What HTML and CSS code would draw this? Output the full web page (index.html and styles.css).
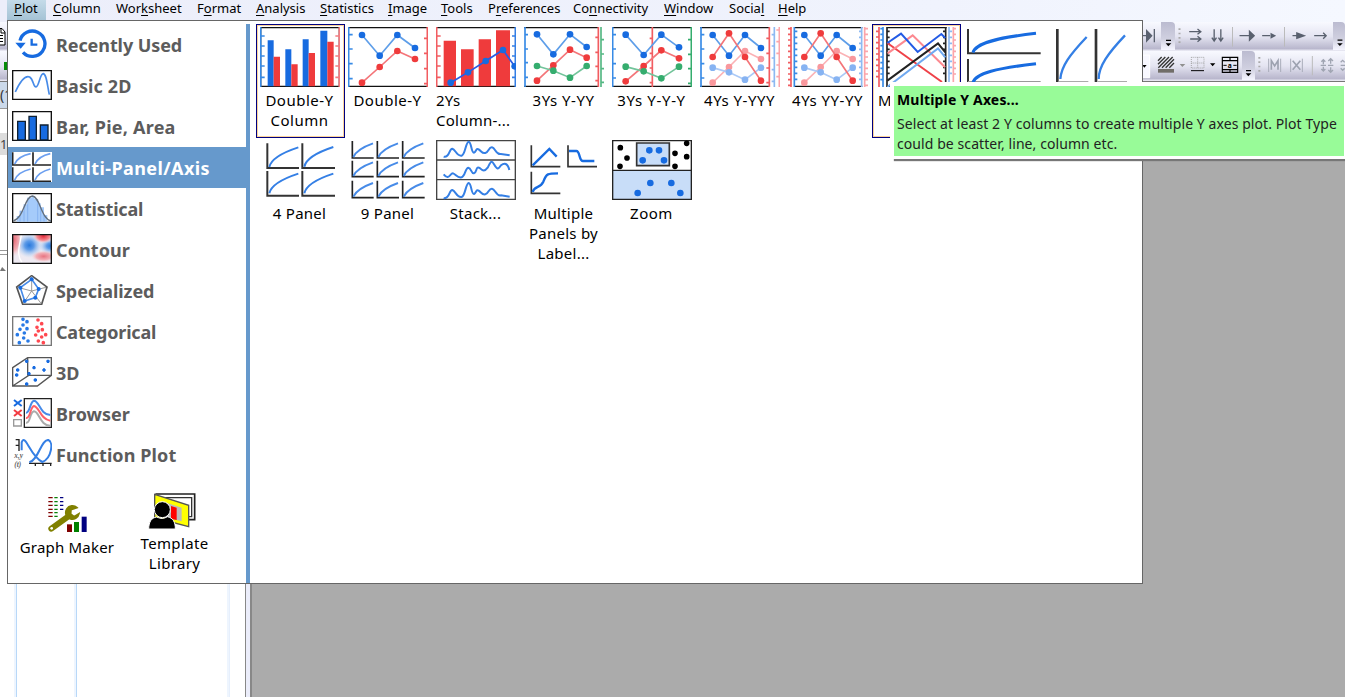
FILE: index.html
```html
<!DOCTYPE html>
<html lang="en">
<head>
<meta charset="utf-8">
<title>Plot menu</title>
<link rel="stylesheet" href="styles.css">
</head>
<body>
<div class="app">
  <nav class="menubar">
    <span class="menu open"><u>P</u>lot</span>
    <span class="menu w-column"><u>C</u>olumn</span>
    <span class="menu w-worksheet">Wor<u>k</u>sheet</span>
    <span class="menu w-format">F<u>o</u>rmat</span>
    <span class="menu w-analysis"><u>A</u>nalysis</span>
    <span class="menu w-statistics"><u>S</u>tatistics</span>
    <span class="menu w-image"><u>I</u>mage</span>
    <span class="menu w-tools"><u>T</u>ools</span>
    <span class="menu w-preferences">P<u>r</u>eferences</span>
    <span class="menu w-connectivity">Co<u>n</u>nectivity</span>
    <span class="menu w-window"><u>W</u>indow</span>
    <span class="menu w-social">Socia<u>l</u></span>
    <span class="menu w-help"><u>H</u>elp</span>
  </nav>
  <div class="toolbar row1">
    <svg class="doc" viewBox="0 0 6 18" width="6" height="18"><path d="M0 .5H2L5 4V17H0" fill="#fff" stroke="#000"/><path d="M1 1V5H5M0 7.5H3M0 10.5H3M0 13.5H3" stroke="#000" fill="none"/></svg>
    <div class="tools">
      <svg viewBox="24 21 54 84" width="18" height="28"><path d="M24 62H36M35 47V78L50 62ZM58 42V82" stroke="#5b6270" stroke-width="4" fill="#5b6270"/></svg>
      <svg class="handle" viewBox="78 21 42 84" width="14" height="28"><path d="M93 76H108" stroke="#000" stroke-width="4"/><path d="M92 85H109L100 94Z"/></svg>
      <svg viewBox="120 21 473 84" width="158" height="28">
        <path d="M133 40V84" stroke="#aaa" stroke-width="6" stroke-dasharray="5 8"/>
        <g stroke="#59606e" stroke-width="4" fill="none"><path d="M162 50H195M187 42L197 50L187 58M165 72H195M187 64L197 72L187 80M237 43V77M230 68L237 78L244 68M257 43V77M250 68L257 78L264 68"/><path d="M313 62H343M381 62H405M472 62H495M537 62H570M564 53L573 62L564 71"/></g>
        <path d="M341 44V80L360 62ZM406 53V71L423 62ZM483 51L513 62L483 73Z" fill="#59606e"/>
        <path d="M292 36V95M448 36V95" stroke="#bbb" stroke-width="3"/>
      </svg>
      <svg class="handle" viewBox="593 21 37 84" width="12" height="28"><path d="M607 76H622" stroke="#000" stroke-width="4"/><path d="M606 85H623L614 94Z"/></svg>
    </div>
  </div>
  <div class="toolbar row2">
    <i class="green-dot"></i>
    <div class="tools">
      <svg viewBox="24 108 297 87" width="99" height="29">
        <path d="M24 120H44V188H24" fill="#f8f8ff" stroke="#fff" stroke-width="3"/><path d="M22 150H35L28 158ZM225 145H241L233 154Z"/>
        <path d="M69 137L80 126M69 148L91 126M70 158L102 126M81 158L113 126M92 158L117 133M103 158L117 144" stroke="#333" stroke-width="4"/><path d="M69 162H117V173H69Z" fill="#706d68"/>
        <path d="M134 147H151L142 156Z" fill="#909090"/>
        <path d="M169 127H207V159H169ZM169 144H207M188 127V159" fill="none" stroke="#999" stroke-width="2.5" stroke-dasharray="3 3"/><path d="M168 167H207" stroke="#000" stroke-width="3"/>
        <path d="M262 127H308V172H262ZM262 137H308M262 164H308M285 127V137M285 164V172" fill="none" stroke="#000" stroke-width="3.5"/><path d="M265 151H275M295 151H305" stroke="#000" stroke-width="3"/><text x="278" y="158" font-size="20" font-weight="bold">a</text>
      </svg>
      <svg class="handle" viewBox="321 108 39 87" width="13" height="29"><path d="M333 167H348" stroke="#000" stroke-width="4"/><path d="M332 175H349L340 184Z"/></svg>
      <svg viewBox="360 108 270 87" width="90" height="29">
        <path d="M373 126V171" stroke="#aaa" stroke-width="6" stroke-dasharray="5 8"/>
        <path d="M401 131V171M437 131V171M467 131V171M502 131V171" stroke="#a9adba" stroke-width="3"/>
        <path d="M409 164V137L419 153L429 137V164M473 137L496 164M496 137L473 164" stroke="#9da2b0" stroke-width="5" fill="none"/>
        <path d="M532 123V181" stroke="#bbb" stroke-width="3"/>
        <path d="M565 135V148M565 155V168M587 131V146M587 157V172M557 151H573M579 151H595M559 140L565 134L571 140M559 162L565 168L571 162M580 138L587 131L594 138M580 165L587 172L594 165M617 142L623 136L629 142M617 160L623 166L629 160M617 151H630" stroke="#a0a5b2" stroke-width="4" fill="none"/>
      </svg>
    </div>
  </div>
  <main class="workspace">
    <section class="sheet">
      <div class="cellref">(1</div>
      <div class="rowno">1</div>
      <div class="splitter"></div>
      <i class="up"></i>
      <div class="grid"><i class="c1"></i><i class="c2"></i><i class="c3"></i></div>
    </section>
    <div class="frame"></div>
  </main>

  <div class="popup">
    <aside class="side">
      <ul class="cats">
        <li><svg viewBox="36 87 120 90" width="40" height="30"><path d="M60 122A38 38 0 1 1 69 157" fill="none" stroke="#176be0" stroke-width="10"/><path d="M46 128H77L62 146Z" fill="#176be0"/><path d="M95 116V134H112" fill="none" stroke="#176be0" stroke-width="7"/></svg><b class="l1">Recently Used</b></li>
        <li><svg viewBox="36 210 120 90" width="40" height="30"><path d="M38 212H154V298H38Z" fill="#fff" stroke="#111" stroke-width="4"/><path d="M46 276C60 245 75 225 89 231C101 238 99 261 108 261C117 260 120 220 130 221C140 223 142 257 148 284" fill="none" stroke="#478be8" stroke-width="5"/></svg><b class="l2">Basic 2D</b></li>
        <li><svg viewBox="36 333 120 90" width="40" height="30"><path d="M38 335H154V421H38Z" fill="#fff" stroke="#111" stroke-width="4"/><path d="M53 364H76V420H53ZM87 349H109V420H87ZM121 375H144V420H121Z" fill="#176be0" stroke="#102030" stroke-width="4"/></svg><b class="l3">Bar, Pie, Area</b></li>
        <li class="active"><svg viewBox="36 456 120 90" width="40" height="30"><path d="M36 456H156V546H36Z" fill="#fff"/><path d="M38 457V495H92M99 457V495H153M38 502V544H92M99 502V544H153" fill="none" stroke="#222" stroke-width="5"/><path d="M44 492Q54 469 92 461M105 492Q115 469 151 461M44 540Q54 516 92 507M105 540Q115 516 151 507" fill="none" stroke="#6b9ff0" stroke-width="5"/></svg><b class="l4">Multi-Panel/Axis</b></li>
        <li><svg viewBox="36 24 120 90" width="40" height="30"><path d="M38 26H154V112H38Z" fill="#fff" stroke="#111" stroke-width="4"/><path d="M50 110V93H60V77H72V58H83V38H95V32H103V42H113V55H122V67H132V90H142V110Z" fill="#a5cbfa"/><path d="M60 77V110M72 58V110M83 38V110M113 42V110M122 67V110M132 90V110" stroke="#78a8ec" stroke-width="2"/><path d="M40 108C72 98 74 34 97 33C120 34 122 99 153 108" fill="none" stroke="#626e7c" stroke-width="4"/></svg><b class="l5">Statistical</b></li>
        <li><svg viewBox="36 147 120 90" width="40" height="30"><defs><radialGradient id="blue"><stop offset="0" stop-color="#2879dc"/><stop offset=".35" stop-color="#5d9be8"/><stop offset="1" stop-color="#b8d8f8" stop-opacity="0"/></radialGradient><radialGradient id="red"><stop offset="0" stop-color="#e32737"/><stop offset=".6" stop-color="#f58b91"/><stop offset="1" stop-color="#fbd4d5" stop-opacity="0"/></radialGradient></defs><path d="M38 149H154V235H38Z" fill="#eeeaf2"/><ellipse cx="88" cy="181" rx="40" ry="38" fill="url(#blue)"/><ellipse cx="153" cy="183" rx="38" ry="26" fill="url(#blue)"/><ellipse cx="130" cy="153" rx="32" ry="22" fill="url(#red)"/><ellipse cx="42" cy="164" rx="24" ry="52" fill="url(#red)" opacity=".65"/><ellipse cx="131" cy="214" rx="38" ry="18" fill="url(#red)" opacity=".6"/><path d="M64 149C62 172 46 208 66 232" stroke="#fff" stroke-width="4" fill="none"/><path d="M38 149H154V235H38Z" fill="none" stroke="#111" stroke-width="4"/></svg><b class="l6">Contour</b></li>
        <li><svg viewBox="36 270 120 90" width="40" height="30"><path d="M95 272L141 306L125 358H68L50 306Z" fill="none" stroke="#555" stroke-width="5"/><path d="M95 318V273M95 318L138 307M95 318L123 355M95 318L70 355M95 318L53 307" stroke="#999" stroke-width="3"/><path d="M95 283L116 312L106 338L74 348L61 308Z" fill="none" stroke="#478be8" stroke-width="5"/><g fill="#176be0"><circle cx="95" cy="283" r="6"/><circle cx="116" cy="312" r="6"/><circle cx="106" cy="338" r="6"/><circle cx="74" cy="348" r="6"/><circle cx="61" cy="308" r="6"/></g></svg><b class="l7">Specialized</b></li>
        <li><svg viewBox="36 393 120 90" width="40" height="30"><path d="M38 395H154V481H38Z" fill="#fff" stroke="#777" stroke-width="4"/><path d="M69 403h0M81 410h0M69 420h0M60 433h0M81 431h0M73 444h0M52 449h0M71 459h0M84 468h0M58 473h0" stroke="#2879e5" stroke-width="11" stroke-linecap="round"/><path d="M114 405h0M125 416h0M111 427h0M127 434h0M115 438h0M107 450h0M137 449h0M125 456h0M115 468h0M130 473h0" stroke="#ff4850" stroke-width="11" stroke-linecap="round"/></svg><b class="l8">Categorical</b></li>
        <li><svg viewBox="36 51 120 90" width="40" height="30"><path d="M38 83L83 53H154V106L112 138H38ZM38 138L86 106H154M83 53V106" fill="none" stroke="#555" stroke-width="4"/><path d="M75 64h10m-5-5v10M139 64h10m-5-5v10M97 83h10m-5-5v10M48 90h10m-5-5v10M127 90h10m-5-5v10M45 105h10m-5-5v10M82 101h10m-5-5v10M101 120h10m-5-5v10M75 132h10m-5-5v10" stroke="#176be0" stroke-width="6"/></svg><b class="l9">3D</b></li>
        <li><svg viewBox="36 174 120 90" width="40" height="30"><path d="M42 180L65 198M65 180L42 198" stroke="#176be0" stroke-width="6"/><path d="M42 210L65 228M65 210L42 228" stroke="#f23b42" stroke-width="6"/><path d="M41 239H64V258H41Z" fill="#fff" stroke="#999" stroke-width="4"/><path d="M73 176H154V262H73Z" fill="#fff" stroke="#222" stroke-width="4"/><g fill="none" stroke-width="6"><path d="M78 248C92 251 88 217 102 214C118 215 121 258 151 257" stroke="#aaa"/><path d="M78 234C92 237 90 200 102 198C118 200 121 239 151 242" stroke="#ff6068"/><path d="M78 218C90 220 90 183 102 182C118 182 120 224 151 225" stroke="#478be8"/></g></svg><b class="l10">Browser</b></li>
        <li><svg viewBox="36 297 120 90" width="40" height="30"><path d="M47 299H57V333M47 316H57M87 370H155M106 370V378M129 370V378M152 370V378" fill="none" stroke="#222" stroke-width="4"/><path d="M65 331V307C76 278 90 349 127 366C155 355 161 306 145 300C123 298 116 360 88 367" fill="none" stroke="#347fe5" stroke-width="6"/><text class="formula" x="43" y="353">x,y</text><text class="formula" x="43" y="380">(t)</text></svg><b class="l11">Function Plot</b></li>
      </ul>
      <div class="actions">
        <div class="maker"><svg viewBox="141 45 123 114" width="41" height="38"><path d="M145 53H158M145 65H158M145 76H158M145 88H158M145 98H158M145 109H158" stroke="#800000" stroke-width="4"/><path d="M163 53H173M163 65H173M163 76H173M163 88H173M163 98H173M163 109H173" stroke="#088008" stroke-width="4"/><path d="M180 53H190M180 65H190M180 76H190M180 88H190" stroke="#000080" stroke-width="4"/><path d="M154 146L204 110" stroke="#808000" stroke-width="18" stroke-linecap="round"/><path d="M231 83A20 20 0 1 0 237 101L222 110L212 102L213 89Z" fill="#808000" stroke="#808000" stroke-width="5"/><circle cx="155" cy="145" r="4" fill="#fff"/><path d="M201 133H216V156H201Z" fill="#800000"/><path d="M222 126H237V156H222Z" fill="#008000"/><path d="M245 110H260V156H245Z" fill="#000080"/></svg><span>Graph Maker</span></div>
        <div class="template"><svg viewBox="444 36 144 114" width="48" height="38"><path d="M466 42H584V119H557" fill="#fff" stroke="#222" stroke-width="5"/><path d="M480 53H575V110H565" fill="#fff" stroke="#333" stroke-width="4"/><path d="M464 43L566 76V140L464 113Z" fill="#ff0" stroke="#555" stroke-width="4"/><path d="M490 65L545 83V124L490 112Z" fill="#bbb"/><path d="M513 78L530 83V120L513 116Z" fill="#f00"/><path d="M446 147C447 124 454 114 470 111C484 117 490 117 502 110C519 114 526 125 526 147Z" stroke="#fff" stroke-width="3"/><circle cx="487" cy="89" r="24" stroke="#fff" stroke-width="3"/></svg><span>Template<br>Library</span></div>
      </div>
    </aside>
    <section class="gallery">
      <div class="tile picked wide"><svg viewBox="30 27 240 180"><path d="M32 29H268V205H32Z" fill="#fff" stroke="#111" stroke-width="4"/><path d="M53 67H71V205H53ZM106 94H124V205H106ZM158 64H176V205H158ZM211 38H232V205H211Z" fill="#176be0"/><path d="M71 116H90V205H71ZM124 139H143V205H124ZM176 105H195V205H176ZM232 71H251V205H232Z" fill="#ef3b3c"/><path d="M32 27V207M32 54H44M32 84H44M32 114H44M32 144H44M32 178H44" stroke="#388be6" stroke-width="5"/><path d="M268 27V207M256 54H268M256 84H268M256 114H268M256 144H268M256 178H268" stroke="#f57c81" stroke-width="5"/></svg><span>Double-Y<br>Column</span></div>
      <div class="tile wide"><svg viewBox="294 27 240 180"><path d="M294 29H534M294 205H534" stroke="#111" stroke-width="4"/><path d="M296 27V207M296 50H308M296 93H308M296 137H308M296 182H308" stroke="#388be6" stroke-width="5"/><path d="M532 27V207M522 61H534M522 106H534M522 152H534M522 197H534" stroke="#f25d61" stroke-width="5"/><path class="line blue" d="M336 51L389 113L442 51L495 90"/><path class="line red" d="M336 194L389 147L442 99L495 123"/></svg><span>Double-Y</span></div>
      <div class="tile left"><svg viewBox="18 27 240 180"><path d="M18 29H258M18 205H258" stroke="#111" stroke-width="4"/><path d="M41 68H78V205H41ZM93 94H131V205H93ZM146 64H183V205H146ZM198 37H240V205H198Z" fill="#ef3b3c"/><path d="M20 27V207M20 54H32M20 84H32M20 114H32M20 144H32M20 178H32" stroke="#f25d61" stroke-width="5"/><path d="M256 27V207M246 54H258M246 84H258M246 114H258M246 178H258" stroke="#347fe5" stroke-width="5"/><path class="line deep" d="M62 194L114 163L167 129L219 96L254 145"/></svg><span>2Ys<br>Column-...</span></div>
      <div class="tile wide"><svg viewBox="282 27 240 180"><path d="M282 29H507M282 205H507" stroke="#111" stroke-width="4"/><path d="M285 27V207M285 50H294M285 93H294M285 134H294M285 178H294" stroke="#388be6" stroke-width="5"/><path d="M505 27V207M496 58H507M496 103H507M496 145H507M496 188H507" stroke="#f25d61" stroke-width="5"/><path d="M513 27V207M513 65H522M513 108H522M513 152H522M513 193H522" stroke="#55b884" stroke-width="5"/><path class="line blue" d="M321 49L370 109L420 49L470 87"/><path class="line red" d="M321 188L370 142L420 95L470 119"/><path class="line green" d="M321 144L370 158L420 179L470 144"/></svg><span>3Ys Y-YY</span></div>
      <div class="tile wider"><svg viewBox="21 27 240 180"><path d="M21 29H261M21 205H261" stroke="#111" stroke-width="4"/><path d="M23 27V207M23 50H33M23 93H33M23 137H33M23 180H33" stroke="#388be6" stroke-width="5"/><path d="M142 27V207M134 61H142M134 106H142M134 150H142M134 194H142" stroke="#f25d61" stroke-width="5"/><path d="M259 27V207M249 65H259M249 109H259M249 152H259M249 196H259" stroke="#35ad6e" stroke-width="5"/><path class="line blue" d="M62 50L116 111L169 50L222 88"/><path class="line red" d="M62 190L116 144L169 97L222 121"/><path class="line green" d="M62 146L116 160L169 181L222 146"/></svg><span>3Ys Y-Y-Y</span></div>
      <div class="tile wide"><svg viewBox="285 27 240 180"><path d="M285 29H495M285 205H495" stroke="#111" stroke-width="4"/><path d="M288 27V207M288 50H298M288 93H298M288 137H298M288 180H298" stroke="#388be6" stroke-width="5"/><path d="M493 27V207M484 61H493M484 106H493M484 150H493M484 194H493" stroke="#f25d61" stroke-width="5"/><path d="M508 27V207M500 50H508M500 84H508M500 120H508M500 155H508M500 190H508" stroke="#8db9f2" stroke-width="5"/><path d="M523 27V207M514 36H523M514 71H523M514 106H523M514 141H523M514 176H523" stroke="#fca5aa" stroke-width="5"/><path class="line pink" d="M323 194L372 147L420 99L468 123"/><path class="line pale" d="M323 149L372 163L420 185L468 149"/><path class="line blue" d="M323 51L372 113L420 51L468 90"/><path class="line red" d="M323 117L372 46L420 117L468 188"/></svg><span>4Ys Y-YYY</span></div>
      <div class="tile wide"><svg viewBox="24 27 240 180"><path d="M42 29H247M42 205H247" stroke="#111" stroke-width="4"/><g stroke-width="5"><path d="M33 27V207M24 32H33M24 49H33M24 66H33M24 83H33M24 100H33M24 117H33M24 134H33M24 151H33M24 168H33M24 185H33M24 202H33" stroke="#f25d61"/><path d="M43 27V207M43 40H52M43 58H52M43 76H52M43 94H52M43 112H52M43 130H52M43 148H52M43 166H52M43 184H52" stroke="#388be6"/><path d="M245 27V207M237 40H245M237 58H245M237 76H245M237 94H245M237 112H245M237 130H245M237 148H245M237 166H245M237 184H245" stroke="#8db9f2"/><path d="M254 27V207M254 32H264M254 49H264M254 66H264M254 83H264M254 100H264M254 117H264M254 134H264M254 151H264M254 168H264M254 185H264M254 202H264" stroke="#fca5aa"/></g><path class="line pink" d="M73 194L122 147L170 99L218 123"/><path class="line pale" d="M73 149L122 163L170 185L218 149"/><path class="line blue" d="M73 51L122 113L170 51L218 90"/><path class="line red" d="M73 117L122 46L170 117L218 188"/></svg><span>4Ys YY-YY</span></div>
      <div class="tile picked left"><svg viewBox="288 27 240 180"><path d="M321 29H500M321 205H500" stroke="#111" stroke-width="4"/><g stroke-width="5"><path d="M297 27V207M288 40H297M288 57H297M288 74H297M288 91H297M288 108H297M288 125H297M288 142H297M288 159H297M288 176H297" stroke="#f25d61"/><path d="M309 27V207M301 32H309M301 49H309M301 66H309M301 83H309M301 100H309M301 117H309M301 134H309M301 151H309M301 168H309M301 185H309" stroke="#388be6"/><path d="M321 27V207M321 40H329M321 58H329M321 76H329M321 94H329M321 112H329M321 130H329M321 148H329M321 166H329M497 27V207M489 40H497M489 58H497M489 76H497M489 94H497M489 112H497M489 130H497M489 148H497M489 166H497" stroke="#222"/><path d="M507 27V207M507 40H516M507 58H516M507 76H516M507 94H516M507 112H516M507 130H516M507 148H516M507 166H516" stroke="#8db9f2"/><path d="M520 27V207M520 32H528M520 49H528M520 66H528M520 83H528M520 100H528M520 117H528M520 134H528M520 151H528M520 168H528" stroke="#fca5aa"/></g><g fill="none" stroke-width="6"><path d="M322 75L486 192" stroke="#ef4148"/><path d="M323 106L398 52L495 148" stroke="#fc8990"/><path d="M322 188L474 76L496 103" stroke="#222"/><path d="M322 207L474 91L496 118" stroke="#70a9f0"/><path d="M322 75L363 47L413 102L484 48L496 60" stroke="#235be5"/></g></svg><span class="cut">M</span></div>
      <div class="tile"><svg viewBox="12 36 240 180"><path d="M24 42V115H242M24 132V207" fill="none" stroke="#333" stroke-width="6"/><path d="M24 200H242" stroke="#999" stroke-width="4"/><path d="M39 113C46 84 113 68 228 55M39 203C46 174 113 160 228 146" fill="none" stroke="#176be0" stroke-width="9"/></svg></div>
      <div class="tile"><svg viewBox="276 36 240 180"><path d="M292 42V205M408 42V205" stroke="#333" stroke-width="8"/><path d="M296 200H385M412 200H501" stroke="#aaa" stroke-width="4"/><path d="M301 192C304 153 329 120 380 66M416 192C416 153 444 115 495 61" fill="none" stroke="#347fe5" stroke-width="7"/></svg></div>
      <div class="tile"><svg viewBox="15 15 240 180"><path d="M37 25V99H132M142 25V99H240M37 108V182H132M142 108V182H240" fill="none" stroke="#333" stroke-width="6"/><g fill="none" stroke="#347fe5" stroke-width="6"><path id="curve" d="M43 96C48 73 75 55 130 37"/><use href="#curve" x="105" y="-1"/><use href="#curve" y="79"/><use href="#curve" x="105" y="79"/></g></svg><span>4 Panel</span></div>
      <div class="tile"><svg viewBox="279 15 240 180"><path d="M292 18V69H356M367 18V69H432M443 18V69H509M292 77V125H356M367 77V125H432M443 77V125H509M292 137V188H356M367 137V188H432M443 137V188H509" fill="none" stroke="#222" stroke-width="5"/><g fill="none" stroke="#478be8" stroke-width="6"><path id="small" d="M295 66Q306 42 354 25"/><use href="#small" x="75"/><use href="#small" x="151"/><use href="#small" y="57"/><use href="#small" x="75" y="57"/><use href="#small" x="151" y="57"/><use href="#small" y="119"/><use href="#small" x="75" y="119"/><use href="#small" x="151" y="119"/></g></svg><span>9 Panel</span></div>
      <div class="tile"><svg viewBox="543 15 240 180"><path d="M545 17H781V193H545ZM545 75H781M545 134H781" fill="#fff" stroke="#444" stroke-width="4"/><g fill="none" stroke="#347fe5" stroke-width="6"><path d="M566 65C584 70 582 40 592 41C601 43 606 65 620 62C631 59 632 21 641 20C650 21 648 54 657 53C664 50 663 38 671 43C679 48 681 56 691 54C701 52 701 36 711 37C721 38 723 61 738 57L764 61"/><path d="M566 118C582 138 585 114 594 115C603 118 607 130 620 127C631 123 631 98 640 98C649 99 649 117 657 115C667 113 661 92 674 99C684 108 689 110 698 98C707 81 709 74 717 88C726 103 729 105 738 91C748 83 758 84 763 105"/><path d="M566 189C584 194 582 164 592 165C601 167 606 189 620 186C631 183 632 145 641 144C650 145 648 178 657 177C664 174 663 162 671 167C679 172 681 180 691 178C701 176 701 160 711 161C721 162 723 185 738 181L764 185"/></g></svg><span>Stack...</span></div>
      <div class="tile"><svg viewBox="27 15 240 180"><path d="M49 31V95H136M159 31V95H246M49 110V175H136" fill="none" stroke="#333" stroke-width="5"/><path d="M53 91L103 42L125 65M162 48H184C196 48 191 78 204 78H238M53 171C57 152 76 161 85 140C94 115 99 115 129 115" fill="none" stroke="#176be0" stroke-width="7"/></svg><span class="tight">Multiple Panels by Label...</span></div>
      <div class="tile wide"><svg viewBox="291 15 240 180"><path d="M293 17H529V193H293Z" fill="#fff" stroke="#222" stroke-width="4"/><path d="M293 106H529V193H293Z" fill="#c8ddf8" stroke="#222" stroke-width="4"/><path d="M365 24H463V92H365Z" fill="#c8ddf8" stroke="#333" stroke-width="5"/><path d="M316 38h0M336 69h0M315 94h0M480 55h0M515 25h0M515 65h0M480 94h0" stroke="#000" stroke-width="17" stroke-linecap="round"/><path d="M403 46h0M432 46h0M383 76h0M447 76h0M406 144h0M469 144h0M368 174h0M496 174h0" stroke="#176be0" stroke-width="20" stroke-linecap="round"/></svg><span>Zoom</span></div>
    </section>
  </div>
  <div class="tip"><strong>Multiple Y Axes...</strong><p>Select at least 2 Y columns to create multiple Y axes plot. Plot Type</p><p>could be scatter, line, column etc.</p></div>
</div>
<svg class="markers" width="0" height="0"><defs>
  <marker id="mb" markerUnits="userSpaceOnUse" markerWidth="22" markerHeight="22" refX="11" refY="11"><circle cx="11" cy="11" r="10" fill="#176be0"/></marker>
  <marker id="mr" markerUnits="userSpaceOnUse" markerWidth="22" markerHeight="22" refX="11" refY="11"><circle cx="11" cy="11" r="10" fill="#ef3b3c"/></marker>
  <marker id="mg" markerUnits="userSpaceOnUse" markerWidth="22" markerHeight="22" refX="11" refY="11"><circle cx="11" cy="11" r="10" fill="#35ad6e"/></marker>
  <marker id="mp" markerUnits="userSpaceOnUse" markerWidth="22" markerHeight="22" refX="11" refY="11"><circle cx="11" cy="11" r="10" fill="#f9989d"/></marker>
  <marker id="ml" markerUnits="userSpaceOnUse" markerWidth="22" markerHeight="22" refX="11" refY="11"><circle cx="11" cy="11" r="10" fill="#86b3f2"/></marker>
</defs></svg>
</body>
</html>
```
FILE: styles.css
```css
* { box-sizing: border-box; }
body { margin: 0; overflow: hidden; font-family: "Noto Sans", sans-serif; color: #000; }
.app { width: 1345px; height: 697px; display: flex; flex-direction: column; position: relative; background: #f0f3fd; overflow: hidden; }
svg { display: block; flex: none; }

.menubar { height: 22px; flex: none; display: flex; align-items: flex-start; padding-left: 7px; font-size: 13px; line-height: 16px; background: linear-gradient(90deg, #eceefa, #f0f3fd 70%, #f5f8ff); }
.menu { height: 20px; white-space: nowrap; margin-right: 15px; }
.menu u { text-underline-offset: 2px; text-decoration-thickness: 1px; }
.open { width: 39px; margin-right: 7px; padding-left: 7px; background: linear-gradient(#c4dbe9, #a5c3d5); }
.w-column { width: 48px; }
.w-worksheet { width: 66px; }
.w-format { width: 44px; }
.w-analysis { width: 49px; }
.w-statistics { width: 53px; }
.w-image { width: 38px; }
.w-tools { width: 32px; }
.w-preferences { width: 70px; }
.w-connectivity { width: 76px; }
.w-window { width: 50px; }
.w-social { width: 34px; }

.toolbar { flex: none; display: flex; justify-content: space-between; background: linear-gradient(#f8f9ff, #e4e4f1 50%, #b9b7cd 92%, #f2f2fa); }
.row1 { height: 29px; }
.row2 { height: 31px; border-bottom: 1px solid #777; }
.tools { display: flex; }
.handle { background: linear-gradient(#bbbbd0, #d0d0e0 60%, #f5f5ff); border-radius: 0 4px 0 0; }
.doc { margin-top: 6px; }
.green-dot { width: 7px; height: 8px; margin-top: 11px; background: linear-gradient(90deg, transparent 4px, #078a07 4px); }

.workspace { flex: 1; display: flex; background: #ababab; }
.sheet { width: 245px; background: #fff; display: flex; flex-direction: column; }
.cellref { height: 27px; background: #cbd9ea; border-bottom: 1px solid #999; font-size: 14px; line-height: 26px; color: #333; }
.rowno { margin-top: 24px; height: 22px; width: 8px; background: #dcdcdc; font-size: 13px; line-height: 22px; letter-spacing: -1px; color: #444; }
.splitter { margin-top: 95px; height: 5px; border: solid #999; border-width: 1px 0; }
.up { width: 6px; height: 4px; margin-top: 12px; background: #777; clip-path: polygon(35% 0, 100% 100%, 0 100%); }
.grid { flex: 1; display: flex; padding-left: 14px; }
.grid i { border: solid #b8d8f8; border-width: 0 1px 0 0; box-shadow: inset -2px 0 #eef5fe; }
.c1 { width: 3px; }
.c2 { width: 60px; }
.grid .c3 { width: 153px; border-color: #e6effc; }
.frame { width: 7px; background: #ebedfa; border: solid #888; border-width: 0 2px 0 1px; }

.popup { position: absolute; left: 7px; top: 20px; width: 1136px; height: 564px; border: 1px solid #666; background: #fff; display: flex; }
.side { width: 242px; margin-top: 3px; border-right: 4px solid #6699cc; }
.cats { list-style: none; margin: 0; padding: 0; color: #5c5c5c; font-size: 18px; line-height: 41px; }
.cats li { height: 41px; padding-left: 4px; display: flex; align-items: flex-start; gap: 4px; }
.cats svg { margin-top: 5px; }
.cats b { padding-top: 1px; white-space: nowrap; }
.cats .active { background: #6699cc; color: #fff; }
.l1, .l7 { letter-spacing: -.08px; }
.l3 { letter-spacing: .22px; }
.l4 { letter-spacing: .4px; }
.l5, .l8 { letter-spacing: -.2px; }
.l2, .l6, .l11 { letter-spacing: .1px; }
.formula { font: italic bold 22px "Liberation Serif", serif; fill: #666; }
.actions { display: flex; font-size: 15px; line-height: 20px; letter-spacing: .2px; text-align: center; }
.maker, .template { display: flex; flex-direction: column; align-items: center; white-space: nowrap; }
.maker { width: 118px; padding-top: 20px; gap: 4px; }
.template { width: 97px; padding-top: 17px; gap: 3px; letter-spacing: .35px; }
.template svg { margin-left: -5px; }

.gallery { flex: 1; align-self: flex-start; display: grid; grid-template-columns: repeat(10, 88px); grid-auto-rows: 113px; padding: 3px 0 0 6px; }
.tile { width: 89px; height: 114px; padding: 3px 5px 0 4px; font-size: 15px; line-height: 20px; letter-spacing: .25px; display: flex; flex-direction: column; align-items: center; text-align: center; gap: 3px; }
.tile svg { width: 80px; height: 60px; }
.tile span { white-space: nowrap; margin-left: -1px; }
.tile .tight { width: 76px; white-space: normal; }
.tile.left span { align-self: flex-start; text-align: left; margin-left: 0; }
.wide { letter-spacing: .5px; }
.wider { letter-spacing: .65px; }
.picked { border: 1px solid #000080; box-shadow: inset 0 0 0 1px #fbd39a; padding: 2px 4px 0 3px; }
.tile.left .cut { margin-left: 2px; }
.line { fill: none; stroke-width: 5; }
.blue { stroke: #5e9ee9; marker: url(#mb); }
.deep { stroke: #285be5; marker: url(#mb); }
.red { stroke: #f47579; marker: url(#mr); }
.green { stroke: #72c49a; marker: url(#mg); }
.pink { stroke: #fbb2b5; marker: url(#mp); }
.pale { stroke: #abcaf7; marker: url(#ml); }
.markers { position: absolute; }

.tip { position: absolute; left: 890px; top: 82px; width: 455px; height: 77px; border: solid #fff; border-width: 4px 1px 3px 4px; background: #98fb98; box-shadow: 4px 2px 1px #777; padding: 4px 3px 0; font-size: 14px; line-height: 20px; letter-spacing: .08px; white-space: nowrap; }
.tip strong { display: block; margin-bottom: 4px; letter-spacing: .17px; }
.tip p { margin: 0; color: #222; }
```
